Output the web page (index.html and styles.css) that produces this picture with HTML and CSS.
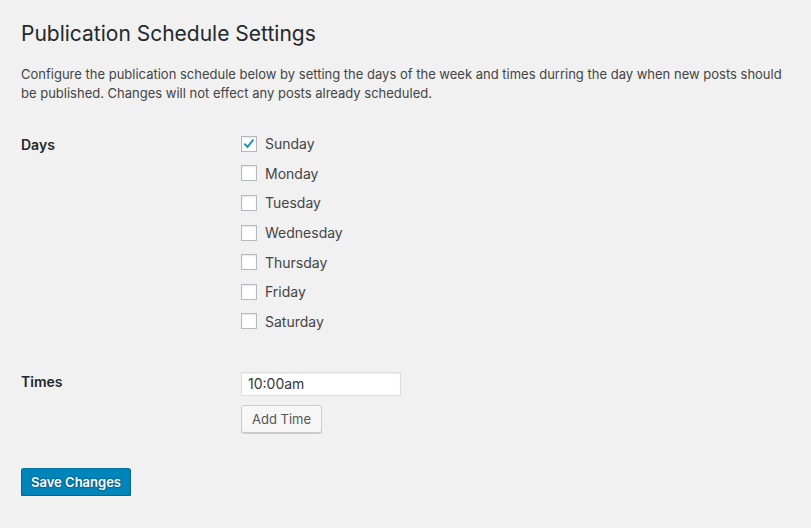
FILE: index.html
```html
<!DOCTYPE html>
<html>
<head>
<meta charset="utf-8">
<link rel="stylesheet" href="styles.css">
</head>
<body>
<div class="wrap">
  <h1 class="title">Publication Schedule Settings</h1>
  <p class="desc">Configure the publication schedule below by setting the days of the week and times durring the day when new posts should be published. Changes will not effect any posts already scheduled.</p>
  <div class="form-row days-row">
    <div class="label">Days</div>
    <div class="field">
      <label class="day"><span class="cb checked"><svg viewBox="0 0 16 16" width="16" height="16"><path d="M3.2 8.2 L6.3 11.4 L12.6 3.6" fill="none" stroke="#1e8cbe" stroke-width="2.2" stroke-linecap="round" stroke-linejoin="round"/></svg></span>Sunday</label>
      <label class="day"><span class="cb"></span>Monday</label>
      <label class="day"><span class="cb"></span>Tuesday</label>
      <label class="day"><span class="cb"></span>Wednesday</label>
      <label class="day"><span class="cb"></span>Thursday</label>
      <label class="day"><span class="cb"></span>Friday</label>
      <label class="day"><span class="cb"></span>Saturday</label>
    </div>
  </div>
  <div class="form-row times-row">
    <div class="label">Times</div>
    <div class="field">
      <div class="input">10:00am</div>
      <div class="btn secondary">Add Time</div>
    </div>
  </div>
  <div class="submit">
    <div class="btn primary">Save Changes</div>
  </div>
</div>
</body>
</html>
```
FILE: styles.css
```css
html, body {
  margin: 0;
  padding: 0;
  background: #f1f1f1;
}
body {
  font-family: Inter, "Liberation Sans", sans-serif;
  color: #23282d;
  font-size: 13px;
}
.wrap {
  padding: 19px 21px 0 21px;
}
.title {
  margin: 0;
  font-size: 21px;
  font-weight: 400;
  line-height: 29px;
  color: #23282d;
}
.desc {
  margin: 17px 0 0 0;
  font-size: 13px;
  line-height: 19px;
  color: #444;
  width: 765px;
}
.form-row {
  display: flex;
}
.label {
  width: 220px;
  font-size: 14px;
  font-weight: 600;
  color: #23282d;
  line-height: 20px;
}
.days-row {
  margin-top: 32px;
}
.field {
  display: flex;
  flex-direction: column;
}
.day {
  display: flex;
  align-items: center;
  height: 29.6px;
  font-size: 14px;
  color: #444;
}
.day:first-child { margin-top: -6px; }
.cb {
  width: 16px;
  height: 16px;
  box-sizing: border-box;
  border: 1px solid #b4b9be;
  background: #fff;
  box-shadow: inset 0 1px 2px rgba(0,0,0,0.1);
  margin-right: 8px;
  display: flex;
  align-items: center;
  justify-content: center;
}
.cb svg { display: block; }
.times-row {
  margin-top: 36px;
}
.input {
  width: 160px;
  height: 24px;
  box-sizing: border-box;
  border: 1px solid #ddd;
  background: #fff;
  box-shadow: inset 0 1px 2px rgba(0,0,0,0.07);
  font-size: 14px;
  line-height: 22px;
  padding: 0 6px;
  color: #32373c;
  margin-top: 0;
}
.btn {
  display: inline-flex;
  align-items: center;
  height: 28px;
  box-sizing: border-box;
  border-radius: 3px;
  padding: 0 10px;
  font-size: 13px;
  align-self: flex-start;
}
.secondary {
  margin-top: 9px;
  background: #f7f7f7;
  border: 1px solid #ccc;
  box-shadow: 0 1px 0 #ccc;
  color: #555;
}
.submit {
  margin-top: 35px;
}
.primary {
  background: #0085ba;
  border: 1px solid #0073aa;
  border-color: #0073aa #006799 #006799;
  box-shadow: 0 1px 0 #006799;
  color: #fff;
  font-weight: 600;
  padding: 0 9px;
  text-shadow: 0 -1px 1px #006799, 1px 0 1px #006799, 0 1px 1px #006799, -1px 0 1px #006799;
}
```
